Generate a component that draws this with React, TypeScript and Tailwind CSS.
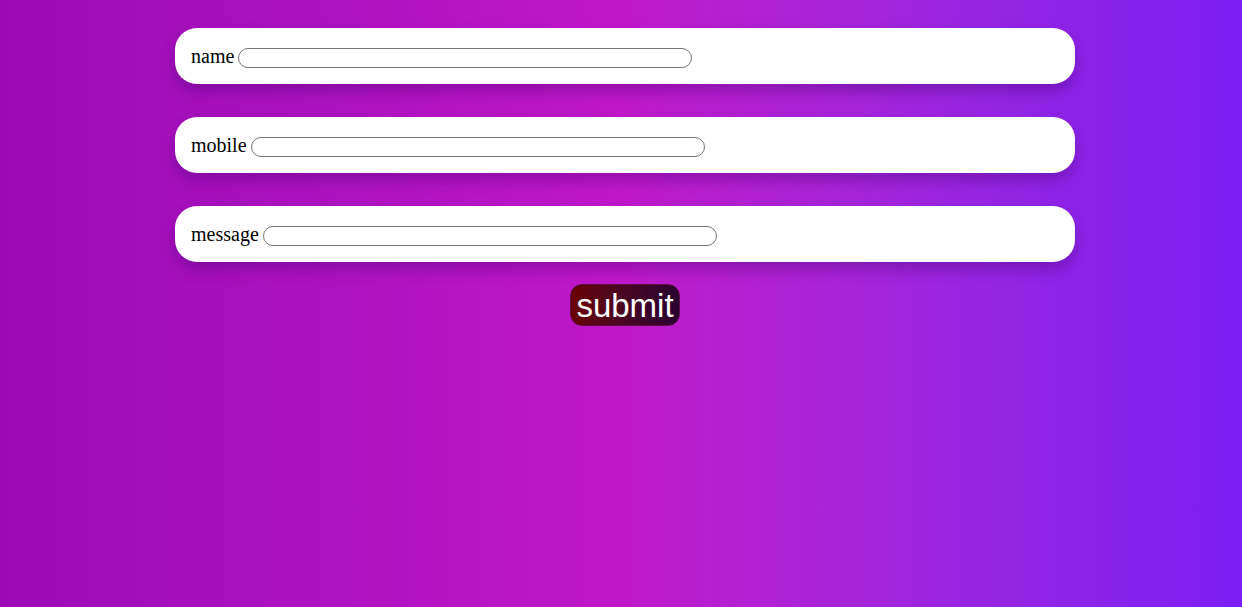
const fields = ['name', 'mobile', 'message'];

export default function App() {
    return (
        <div className="min-h-[607px] w-full bg-linear-to-r from-[#9a0ab6] via-[#c017c9] to-[#7a1cf3] pt-7">
            <form className="ml-[175px] w-[900px] flex flex-col gap-[33px]" style={{ fontFamily: '"Liberation Serif", serif' }}>
                {fields.map((f) => (
                    <div
                        key={f}
                        className="h-14 bg-white rounded-[22px] pl-4 flex items-center text-[20px] text-black shadow-[0_8px_14px_rgba(70,0,110,0.35)]"
                    >
                        <label className="leading-none">{f}</label>
                        <input
                            type="text"
                            className="ml-1 mt-[4px] w-[454px] h-5 rounded-full border border-[#767676] bg-white"
                        />
                    </div>
                ))}
            </form>
            <div className="flex justify-center mt-[22px] pl-[8px]">
                <button
                    type="button"
                    className="h-[42px] px-[5px] rounded-xl border border-[#5a1040] bg-linear-to-r from-[#6a0000] to-[#2a0030] text-white text-[33px] leading-none"
                    style={{ fontFamily: '"Liberation Sans", sans-serif' }}
                >
                    submit
                </button>
            </div>
        </div>
    );
}
